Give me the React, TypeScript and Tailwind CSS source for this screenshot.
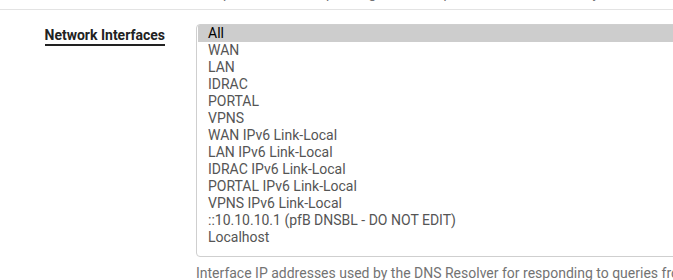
const interfaces = [
    "All",
    "WAN",
    "LAN",
    "IDRAC",
    "PORTAL",
    "VPNS",
    "WAN IPv6 Link-Local",
    "LAN IPv6 Link-Local",
    "IDRAC IPv6 Link-Local",
    "PORTAL IPv6 Link-Local",
    "VPNS IPv6 Link-Local",
    "::10.10.10.1 (pfB DNSBL - DO NOT EDIT)",
    "Localhost",
];

export default function App() {
    return (
        <div className="h-[280px] w-[673px] overflow-hidden bg-white font-['Roboto',sans-serif] text-[14px]">
            {/* tail of the previous row; only the descenders show */}
            <div className="mt-[-17px] whitespace-nowrap pl-[196px] text-[14px] leading-[20px] text-[#737373]">
                The port used for responding to DNS requests. It should normally be left blank unless another service needs to bind to TCP/UDP port 53.
            </div>
            <div className="mt-[6px] h-px w-full bg-[#e3e3e3]" />

            <div className="flex pt-[14px]">
                <div className="w-[196px] shrink-0 pr-[31px] text-right">
                    <span className="mt-[3px] inline-block border-b-2 border-[#222] text-[14px] font-bold leading-[17px] text-[#222]">
                        Network Interfaces
                    </span>
                </div>

                <div className="min-w-0 flex-1">
                    <div className="h-[233px] w-[560px] overflow-hidden rounded-[4px] border border-[#cfcfcf] pl-px">
                        {interfaces.map((name, i) => (
                            <div
                                className={
                                    i === 0
                                        ? "h-[17px] whitespace-nowrap bg-[#cdcdcd] pl-[10px] text-[14px] leading-[17px] text-black"
                                        : "h-[17px] whitespace-nowrap pl-[10px] text-[14px] leading-[17px] text-[#555]"
                                }
                                key={name}
                            >
                                {name}
                            </div>
                        ))}
                    </div>
                    <p className="mt-[6px] whitespace-nowrap text-[14px] leading-[20px] text-[#737373]">
                        Interface IP addresses used by the DNS Resolver for responding to queries from clients. If an interface has both IPv4 and IPv6 IPs, both are used.
                    </p>
                </div>
            </div>
        </div>
    );
}
